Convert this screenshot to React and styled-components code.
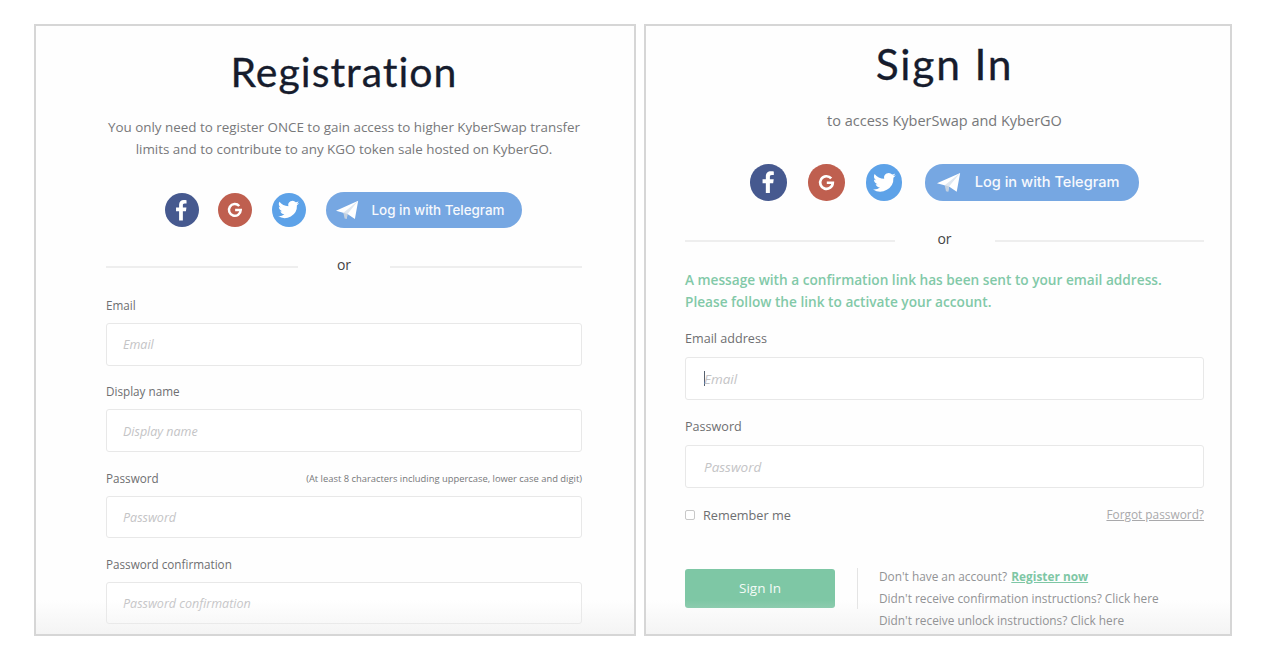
import React from "react";
import styled, { createGlobalStyle } from "styled-components";

const Global = createGlobalStyle`
  html, body { margin: 0; padding: 0; background: #fff; height: 668px; overflow: hidden; }
  * { box-sizing: border-box; }
`;

const Page = styled.div`
  display: flex;
  gap: 8px;
  padding: 24px 0 0 34px;
  height: 668px;
  font-family: "Open Sans", sans-serif;
`;

const Panel = styled.section`
  position: relative;
  flex: none;
  width: ${(p) => p.$width}px;
  height: 612px;
  border: 2px solid #d6d6d6;
  overflow: hidden;
  padding: ${(p) => p.$padding};
  background: #fefefe;
  &::after {
    content: "";
    position: absolute;
    left: 0;
    right: 0;
    bottom: 0;
    height: 34px;
    background: linear-gradient(to bottom, rgba(236,236,236,0), rgba(236,236,236,0.55));
    pointer-events: none;
  }
`;

const Title = styled.h1`
  margin: ${(p) => p.$margin};
  text-align: center;
  font-family: Lato, sans-serif;
  font-weight: 400;
  font-size: ${(p) => p.$size}px;
  line-height: 50px;
  letter-spacing: ${(p) => p.$spacing}px;
  color: #161c2d;
  -webkit-text-stroke: 0.3px #161c2d;
`;

const Lead = styled.p`
  margin: ${(p) => p.$margin};
  text-align: center;
  font-size: ${(p) => p.$size}px;
  line-height: 22px;
  color: #77787a;
`;

const Socials = styled.div`
  display: flex;
  justify-content: center;
  align-items: center;
  gap: ${(p) => p.$gap}px;
  margin: ${(p) => p.$margin};
  padding-right: ${(p) => p.$trim}px;
`;

const Circle = styled.span`
  display: flex;
  align-items: center;
  justify-content: center;
  width: ${(p) => p.$size}px;
  height: ${(p) => p.$size}px;
  border-radius: 50%;
  background: ${(p) => p.$bg};
  flex: none;
`;

const Telegram = styled.button`
  display: flex;
  align-items: center;
  border: 0;
  padding: 0;
  height: ${(p) => p.$height}px;
  width: ${(p) => p.$width}px;
  margin-left: ${(p) => p.$offset}px;
  border-radius: 18px;
  background: #76a7e2;
  color: #f6f9fd;
  font-family: Inter, sans-serif;
  font-weight: 500;
  font-size: ${(p) => p.$font}px;
  white-space: nowrap;
`;

const PlaneBox = styled.span`
  display: flex;
  width: ${(p) => p.$w}px;
  justify-content: flex-end;
  flex: none;
  margin-right: ${(p) => p.$gap}px;
`;

const Divider = styled.div`
  display: flex;
  align-items: center;
  margin: ${(p) => p.$margin};
  color: #444;
  font-size: 14px;
  line-height: 20px;
`;

const Rule = styled.span`
  flex: 1;
  height: 2px;
  margin-top: 4px;
  background: #eeeeee;
`;

const Or = styled.span`
  width: ${(p) => p.$width}px;
  text-align: center;
`;

const Label = styled.label`
  display: flex;
  justify-content: space-between;
  align-items: center;
  height: 18px;
  font-size: ${(p) => p.$size}px;
  line-height: 18px;
  color: #6e6f71;
  margin-bottom: ${(p) => p.$mb}px;
`;

const Hint = styled.span`
  font-size: 9.4px;
  line-height: 12px;
  padding-top: 2px;
  color: #77787a;
`;

const Field = styled.div`
  display: flex;
  align-items: center;
  height: ${(p) => p.$height}px;
  margin-bottom: ${(p) => p.$mb}px;
  padding: 1px 0 0 ${(p) => p.$pad}px;
  border: 1px solid #e8e8e8;
  border-radius: 3px;
  background: #fff;
  color: #c4c4c6;
  font-size: ${(p) => p.$size}px;
  font-style: italic;
`;

const Caret = styled.span`
  display: inline-block;
  width: 1px;
  height: 15px;
  margin-right: -1px;
  background: #55606e;
`;

const Notice = styled.p`
  margin: 0 0 17px;
  color: #82c9a8;
  font-size: 13.67px;
  font-weight: 600;
  line-height: 22px;
`;

const OptionsRow = styled.div`
  display: flex;
  justify-content: space-between;
  align-items: center;
  height: 20px;
  margin-bottom: 43.5px;
`;

const Remember = styled.span`
  display: flex;
  align-items: center;
  gap: 8px;
  padding-top: 2px;
  font-size: 12.7px;
  color: #6e6f71;
`;

const Box = styled.span`
  width: 10px;
  height: 10px;
  border: 1px solid #c8c8c8;
  border-radius: 2px;
  background: #fff;
`;

const Forgot = styled.a`
  padding-bottom: 1px;
  font-size: 11.85px;
  color: #a9a9ab;
  text-decoration: underline;
`;

const Footer = styled.div`
  display: flex;
  align-items: flex-start;
`;

const Submit = styled.button`
  flex: none;
  width: 150px;
  height: 39px;
  margin-top: 1px;
  border: 0;
  border-radius: 3px;
  background: #7ec7a5;
  color: #f4fbf7;
  font-family: "Open Sans", sans-serif;
  font-size: 13.5px;
  font-weight: 500;
`;

const VLine = styled.span`
  flex: none;
  width: 1px;
  height: 41px;
  margin: 0 21px 0 22px;
  background: #e4e4e4;
`;

const Help = styled.div`
  position: relative;
  z-index: 1;
  font-size: 11.85px;
  line-height: 22px;
  color: #929395;
  margin-top: -3px;
  white-space: nowrap;
`;

const Register = styled.a`
  margin-left: 1px;
  font-weight: 700;
  color: #7ec7a5;
  text-decoration: underline;
`;

const Facebook = ({ s }) => (
  <svg width={s} height={s} viewBox="0 0 24 24" fill="#fff">
    <path d="M13.6 22v-9h3l.5-3.6h-3.5V7.2c0-1 .3-1.7 1.8-1.7h1.8V2.2c-.4 0-1.5-.2-2.7-.2-2.7 0-4.6 1.7-4.6 4.7v2.7H6.9V13h3v9z" />
  </svg>
);

const Google = ({ s }) => (
  <svg width={s} height={s} viewBox="0 0 24 24" fill="none" stroke="#fff" strokeWidth="3.4">
    <path d="M18 6.8A8 8 0 1 0 20 12.3H12.4" />
  </svg>
);

const Twitter = ({ s }) => (
  <svg width={s} height={s} viewBox="0 0 24 24" fill="#fff">
    <path d="M23 5.1c-.8.4-1.7.6-2.6.7.9-.6 1.6-1.4 2-2.5-.9.5-1.9.9-2.9 1.1A4.5 4.5 0 0 0 11.8 8.5C8 8.300 4.700 6.500 2.500 3.800c-1.200 2.100-.6 4.700 1.400 6-.7 0-1.400-.2-2-.6 0 2.200 1.500 4.100 3.600 4.500-.7.200-1.400.2-2 .1.600 1.800 2.200 3.100 4.200 3.100A9.100 9.100 0 0 1 1 18.800 12.800 12.800 0 0 0 20.700 7.400c.9-.6 1.700-1.400 2.300-2.300z" />
  </svg>
);

const Plane = ({ w }) => (
  <svg width={w} height={w * 0.86} viewBox="0 0 28 24">
    <path d="M0 13 27 1 23 23 14 17z" fill="#fff" />
    <path d="M9 15.500 27 1 14 17l-1 6z" fill="#dfe7f0" />
    <path d="M9 15.500 10.500 22.500 13 23l1-6z" fill="#c3d0df" />
  </svg>
);

const Social = ({ circle, gap, margin, trim, tg }) => (
  <Socials $gap={gap} $margin={margin} $trim={trim}>
    <Circle $size={circle} $bg="#46598f"><Facebook s={circle * 0.72} /></Circle>
    <Circle $size={circle} $bg="#bf5f4f"><Google s={circle * 0.52} /></Circle>
    <Circle $size={circle} $bg="#5da2e8"><Twitter s={circle * 0.68} /></Circle>
    <Telegram $height={tg.h} $width={tg.w} $offset={tg.offset} $font={tg.font}>
      <PlaneBox $w={tg.planeBox} $gap={tg.planeGap}><Plane w={tg.plane} /></PlaneBox>
      Log in with Telegram
    </Telegram>
  </Socials>
);

export default function App() {
  return (
    <Page>
      <Global />
      <Panel $width={602} $padding="21px 52px 0 70px">
        <Title $size={41} $spacing={1} $margin="0 0 19px">Registration</Title>
        <Lead $size={13.4} $margin="0 0 32px">
          You only need to register ONCE to gain access to higher KyberSwap transfer
          <br />
          limits and to contribute to any KGO token sale hosted on KyberGO.
        </Lead>
        <Social
          circle={34}
          gap={19.5}
          margin="0 0 27px"
          trim={2}
          tg={{ h: 36, w: 196, offset: 0.5, font: 13.4, planeBox: 33, planeGap: 13, plane: 23 }}
        />
        <Divider $margin="0 0 21px">
          <Rule /><Or $width={92}>or</Or><Rule />
        </Divider>
        <Label $size={11.7} $mb={9}>Email</Label>
        <Field $size={12.5} $height={42.5} $pad={16} $mb={16.8}>Email</Field>
        <Label $size={11.7} $mb={9}>Display name</Label>
        <Field $size={12.5} $height={42.5} $pad={16} $mb={16.8}>Display name</Field>
        <Label $size={11.7} $mb={9}>Password <Hint>(At least 8 characters including uppercase, lower case and digit)</Hint></Label>
        <Field $size={12.5} $height={42.5} $pad={16} $mb={16.8}>Password</Field>
        <Label $size={11.7} $mb={9}>Password confirmation</Label>
        <Field $size={12.5} $height={42.5} $pad={16} $mb={16.8}>Password confirmation</Field>
      </Panel>
      <Panel $width={588} $padding="13px 26px 0 39px">
        <Title $size={42.5} $spacing={1.8} $margin="0 0 21px">Sign In</Title>
        <Lead $size={14.5} $margin="0 0 32px">to access KyberSwap and KyberGO</Lead>
        <Social
          circle={36.5}
          gap={21.3}
          margin="0 0 28px"
          trim={0}
          tg={{ h: 36.5, w: 214, offset: 1, font: 14.6, planeBox: 36, planeGap: 14, plane: 24 }}
        />
        <Divider $margin="0 0 20px">
          <Rule /><Or $width={100}>or</Or><Rule />
        </Divider>
        <Notice>
          A message with a confirmation link has been sent to your email address.
          <br />
          Please follow the link to activate your account.
        </Notice>
        <Label $size={12.6} $mb={9}>Email address</Label>
        <Field $size={13.5} $height={43.5} $pad={18} $mb={17.5}><Caret />Email</Field>
        <Label $size={12.6} $mb={9}>Password</Label>
        <Field $size={13.5} $height={43.5} $pad={18} $mb={16}>Password</Field>
        <OptionsRow>
          <Remember><Box />Remember me</Remember>
          <Forgot>Forgot password?</Forgot>
        </OptionsRow>
        <Footer>
          <Submit>Sign In</Submit>
          <VLine />
          <Help>
            Don't have an account? <Register>Register now</Register>
            <br />
            Didn't receive confirmation instructions? Click here
            <br />
            Didn't receive unlock instructions? Click here
          </Help>
        </Footer>
      </Panel>
    </Page>
  );
}
